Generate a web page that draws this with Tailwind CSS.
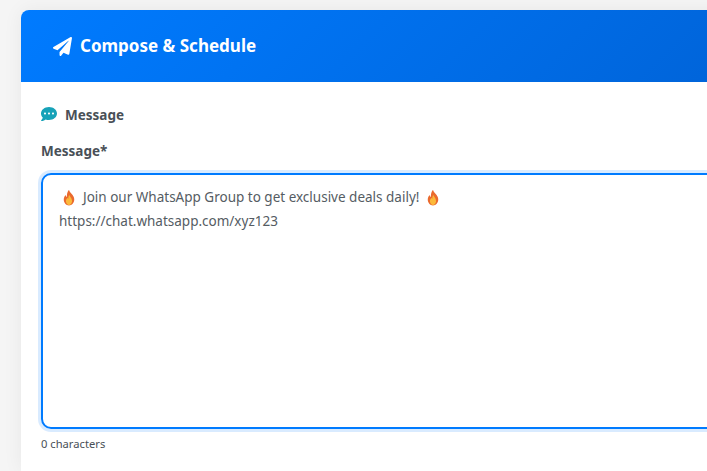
<!DOCTYPE html>
<html lang="en">
<head>
  <meta charset="UTF-8">
  <meta name="viewport" content="width=device-width, initial-scale=1.0">
  <title>Compose & Schedule</title>
  <script src="https://cdn.jsdelivr.net/npm/@tailwindcss/browser@4"></script>
</head>
<body class="bg-[#f5f5f5] h-[471px] overflow-hidden font-['Noto_Sans',sans-serif]">
  <div class="pt-[10px] pl-[21px] w-[800px]">
    <div class="bg-white rounded-t-lg overflow-hidden shadow-[0_0_20px_rgba(0,0,0,0.06)] h-[461px]">
      <div class="h-[72px] pl-[32px] flex items-center gap-[8px] text-white bg-linear-[135deg,#007bff,#0062d6]">
        <svg class="w-[19px] h-[19px]" viewBox="0 0 512 512" fill="currentColor"><path d="M476 3.2 12.5 270.6c-18.1 10.4-15.8 35.6 2.2 43.2L121 358.4l287.3-253.2c5.500-4.900 13.300 2.600 8.600 8.300L176 407v80.500c0 23.600 28.500 32.900 42.500 15.800L282 426l124.600 52.200c14.200 6 30.400-2.900 33-18.200l72-432C515 7.800 493.300-6.800 476 3.200z"/></svg>
        <h2 class="text-[17px] font-bold">Compose &amp; Schedule</h2>
      </div>
      <div class="pt-[23px] pl-[20px]">
        <div class="flex items-center gap-[8px] h-[20px] text-[#495057] text-[13.5px] font-bold">
          <svg class="w-[16px] h-[16px] -mt-[2px] text-[#17a2b8]" viewBox="0 0 512 512" fill="currentColor"><path d="M256 32C114.600 32 0 125.100 0 240c0 49.600 21.400 95 57 130.700C44.500 421.100 2.700 466 2.200 466.500c-2.200 2.300-2.800 5.700-1.500 8.700S4.800 480 8 480c66.300 0 116-31.800 140.600-51.400 32.700 12.300 69 19.400 107.400 19.400 141.400 0 256-93.100 256-208S397.400 32 256 32zM128 272c-17.700 0-32-14.300-32-32s14.300-32 32-32 32 14.300 32 32-14.300 32-32 32zm128 0c-17.700 0-32-14.300-32-32s14.300-32 32-32 32 14.300 32 32-14.300 32-32 32zm128 0c-17.700 0-32-14.300-32-32s14.300-32 32-32 32 14.300 32 32-14.300 32-32 32z"/></svg>
          <span>Message</span>
        </div>
        <label class="block mt-[16px] h-[20px] leading-[20px] text-[#495057] text-[13.5px] font-bold">Message*</label>
        <div class="mt-[12px] h-[256px] border-2 border-[#007bff] rounded-[10px] shadow-[0_0_0_3px_rgba(0,123,255,0.15)] pl-[16px] pt-[10px] text-[#555c63] text-[13.5px] leading-[24px]">
          <div class="flex items-center">
            <svg class="w-[14px] h-[17px] ml-[3px] mr-[7px]" viewBox="0 0 16 18"><path fill="#ea6a2e" d="M8 0c.6 2.500 2 3.600 3.400 5.300C13 7.200 14 9 14 11.200 14 15 11.300 18 8 18s-6-3-6-6.800c0-2.200 1-4 2-5.200.2 1.200.8 2 1.600 2.400C5.400 5 6.200 2 8 0z"/><path fill="#fbb93a" d="M8.300 6c.4 1.500 3.200 3.500 3.200 7 0 2.600-1.600 4.600-3.500 4.600S4.500 15.600 4.500 13c0-1.600.8-2.900 2-3.800.1.600.4 1 .8 1.200C7.200 9 7.500 7 8.300 6z"/></svg>
            <span>Join our WhatsApp Group to get exclusive deals daily!</span>
            <svg class="w-[14px] h-[17px] ml-[7px]" viewBox="0 0 16 18"><path fill="#ea6a2e" d="M8 0c.6 2.500 2 3.600 3.400 5.300C13 7.200 14 9 14 11.200 14 15 11.300 18 8 18s-6-3-6-6.800c0-2.200 1-4 2-5.200.2 1.200.8 2 1.600 2.400C5.400 5 6.200 2 8 0z"/><path fill="#fbb93a" d="M8.300 6c.4 1.500 3.200 3.500 3.200 7 0 2.600-1.600 4.600-3.500 4.600S4.500 15.600 4.500 13c0-1.600.8-2.900 2-3.800.1.600.4 1 .8 1.200C7.200 9 7.500 7 8.300 6z"/></svg>
          </div>
          <div>https://chat.whatsapp.com/xyz123</div>
        </div>
        <p class="mt-[6px] text-[11.2px] leading-[18px] text-[#495057]">0 characters</p>
      </div>
    </div>
  </div>
</body>
</html>
